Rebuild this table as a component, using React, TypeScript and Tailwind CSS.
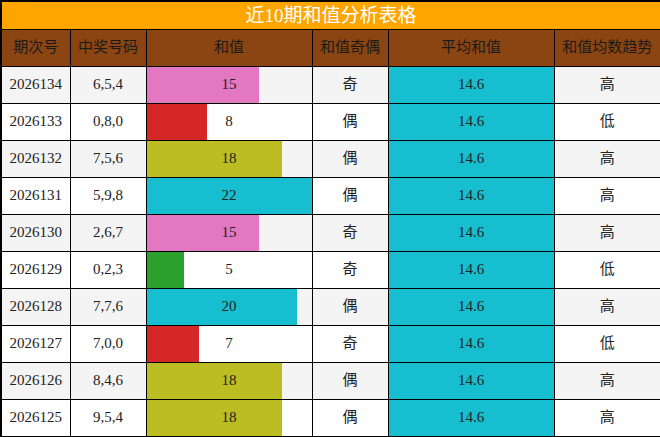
const rows = [
  { issue: "2026134", nums: "6,5,4", sum: 15, color: "#E377C2", parity: "奇", trend: "高" },
  { issue: "2026133", nums: "0,8,0", sum: 8, color: "#D62728", parity: "偶", trend: "低" },
  { issue: "2026132", nums: "7,5,6", sum: 18, color: "#BCBD22", parity: "偶", trend: "高" },
  { issue: "2026131", nums: "5,9,8", sum: 22, color: "#17BECF", parity: "偶", trend: "高" },
  { issue: "2026130", nums: "2,6,7", sum: 15, color: "#E377C2", parity: "奇", trend: "高" },
  { issue: "2026129", nums: "0,2,3", sum: 5, color: "#2CA02C", parity: "奇", trend: "低" },
  { issue: "2026128", nums: "7,7,6", sum: 20, color: "#17BECF", parity: "偶", trend: "高" },
  { issue: "2026127", nums: "7,0,0", sum: 7, color: "#D62728", parity: "奇", trend: "低" },
  { issue: "2026126", nums: "8,4,6", sum: 18, color: "#BCBD22", parity: "偶", trend: "高" },
  { issue: "2026125", nums: "9,5,4", sum: 18, color: "#BCBD22", parity: "偶", trend: "高" },
];

const maxSum = 22;
const headers = ["期次号", "中奖号码", "和值", "和值奇偶", "平均和值", "和值均数趋势"];

export default function App() {
  return (
    <div className="w-[660px] h-[437px] bg-white font-['Liberation_Serif','Noto_Sans_CJK_SC',serif] text-[15px] text-[#222]">
      <table className="w-[660px] table-fixed border-collapse border-2 border-black">
        <colgroup>
          <col className="w-[69px]" />
          <col className="w-[76px]" />
          <col className="w-[166px]" />
          <col className="w-[76px]" />
          <col className="w-[166px]" />
          <col className="w-[107px]" />
        </colgroup>
        <thead>
          <tr>
            <th colSpan={6} className="h-[28px] p-0 border border-black bg-[#FFA500] text-white text-[19px] font-normal leading-none">
              近10期和值分析表格
            </th>
          </tr>
          <tr className="bg-[#8B4513]">
            {headers.map((h) => (
              <th key={h} className="h-[37px] p-0 border border-black font-normal text-[15px] text-[#1a1a1a]">
                {h}
              </th>
            ))}
          </tr>
        </thead>
        <tbody>
          {rows.map((r, i) => (
            <tr key={r.issue} className={i % 2 === 0 ? "bg-[#F4F4F4]" : "bg-white"}>
              <td className="h-[37px] p-0 border border-black text-center">{r.issue}</td>
              <td className="p-0 border border-black text-center">{r.nums}</td>
              <td className="p-0 border border-black">
                <div className="relative h-[36px] flex items-center justify-center">
                  <div
                    className="absolute left-0 top-0 bottom-0"
                    style={{ width: `${(r.sum / maxSum) * 100}%`, background: r.color }}
                  />
                  <span className="relative">{r.sum}</span>
                </div>
              </td>
              <td className="p-0 border border-black text-center">{r.parity}</td>
              <td className="p-0 border border-black text-center bg-[#17BECF]">14.6</td>
              <td className="p-0 border border-black text-center">{r.trend}</td>
            </tr>
          ))}
        </tbody>
      </table>
    </div>
  );
}
